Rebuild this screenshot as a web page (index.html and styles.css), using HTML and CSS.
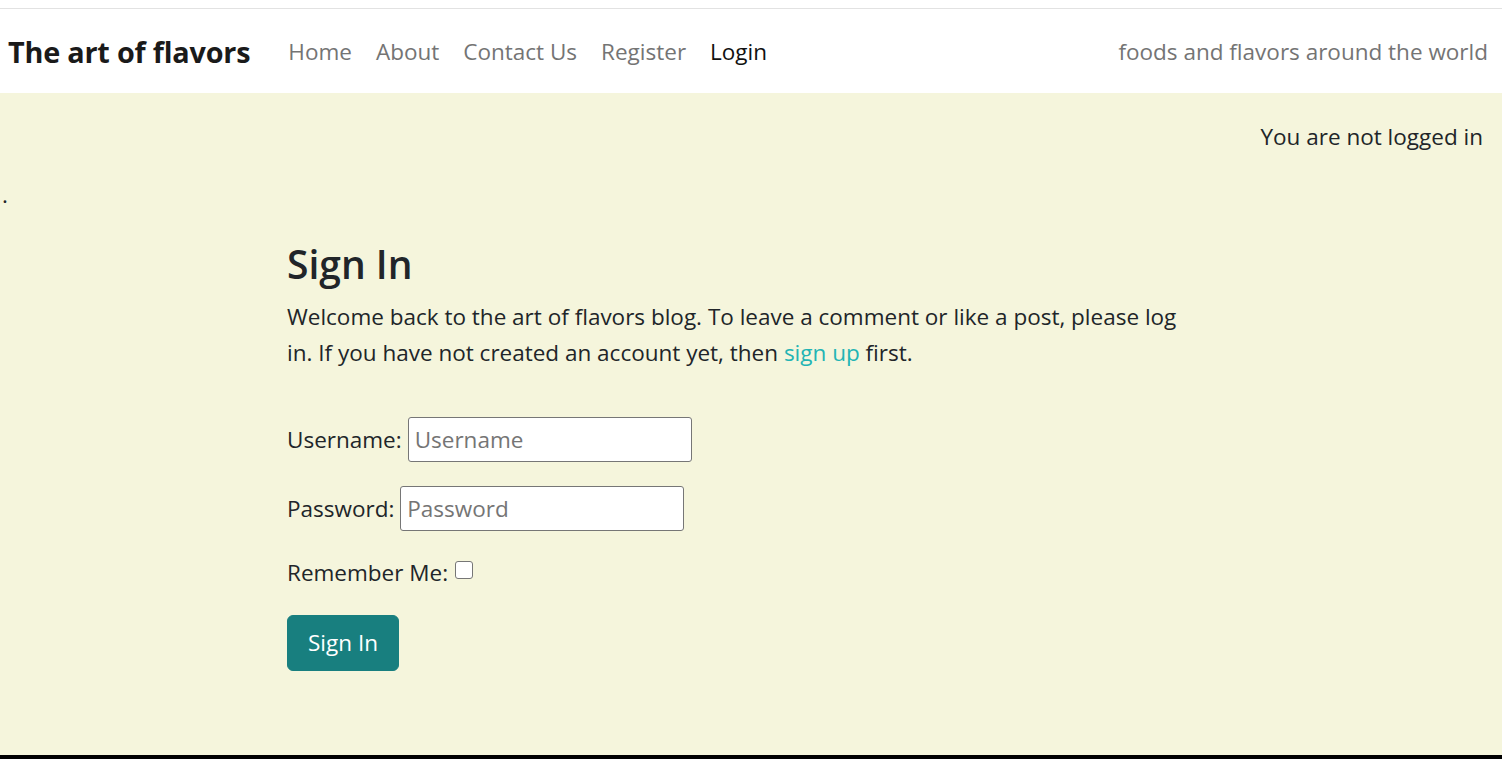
FILE: index.html
```html
<!DOCTYPE html>
<html lang="en">
<head>
<meta charset="utf-8">
<title>The art of flavors</title>
<link rel="stylesheet" href="styles.css">
</head>
<body>
<header class="site-header">
  <nav class="navbar">
    <a class="brand" href="#">The art of flavors</a>
    <ul class="nav-links">
      <li><a class="nav-link" href="#">Home</a></li>
      <li><a class="nav-link" href="#">About</a></li>
      <li><a class="nav-link" href="#">Contact Us</a></li>
      <li><a class="nav-link" href="#">Register</a></li>
      <li><a class="nav-link active" href="#">Login</a></li>
    </ul>
    <span class="tagline">foods and flavors around the world</span>
  </nav>
</header>
<main class="main">
  <p class="status">You are not logged in</p>
  <p class="dot">.</p>
  <section class="signin">
    <h2 class="title">Sign In</h2>
    <p class="intro">Welcome back to the art of flavors blog. To leave a comment or like a post, please log in. If you have not created an account yet, then <a class="link" href="#">sign up</a> first.</p>
    <form class="form">
      <div class="row">
        <label class="label" for="id_login">Username:</label>
        <input class="field" type="text" id="id_login" placeholder="Username">
      </div>
      <div class="row">
        <label class="label" for="id_password">Password:</label>
        <input class="field" type="password" id="id_password" placeholder="Password">
      </div>
      <div class="row row-check">
        <label class="label" for="id_remember">Remember Me:</label>
        <input class="check" type="checkbox" id="id_remember">
      </div>
      <button class="btn" type="submit">Sign In</button>
    </form>
  </section>
</main>
<footer class="footer"></footer>
</body>
</html>
```

FILE: styles.css
```css
* { box-sizing: border-box; }
html, body { margin: 0; padding: 0; }
body {
  font-family: "Open Sans", "Noto Sans", "Liberation Sans", sans-serif;
  font-size: 22.5px;
  line-height: 36px;
  color: #212529;
  background: #ffffff;
}
.site-header {
  background: #fff;
  padding-top: 8px;
}
.navbar {
  border-top: 1px solid #e2e2e2;
  height: 85px;
  display: flex;
  align-items: center;
  padding: 2px 14px 0 8px;
}
.brand {
  font-size: 28.8px;
  font-weight: 700;
  color: #1a1a1a;
  text-decoration: none;
  margin-right: 26px;
  letter-spacing: -0.2px;
}
.nav-links {
  display: flex;
  list-style: none;
  margin: 0;
  padding: 0;
}
.nav-link {
  display: block;
  padding: 0 12px;
  color: #747474;
  text-decoration: none;
}
.nav-link.active { color: #111; }
.tagline {
  margin-left: auto;
  color: #747474;
}
.main {
  background: #f5f5dc;
  min-height: 662px;
  padding-top: 26px;
}
.status {
  margin: 0 19px 22px 0;
  text-align: right;
}
.dot {
  margin: 0 0 0 2px;
}
.signin {
  width: 924px;
  margin-left: 287px;
  padding-top: 24px;
  padding-bottom: 84px;
}
.title {
  font-size: 39px;
  font-weight: 600;
  line-height: 54px;
  margin: 0 0 8px;
}
.intro {
  max-width: 905px;
  margin: 0 0 46px;
}
.link {
  color: #22b4b4;
  text-decoration: none;
}
.form { margin: 0; }
.row {
  display: flex;
  align-items: center;
  gap: 6px;
  margin-bottom: 24px;
}
.field {
  width: 284px;
  height: 45px;
  border: 1px solid #767676;
  border-radius: 3px;
  background: #fff;
  padding: 0 6px;
  font: inherit;
  color: #212529;
}
.field::placeholder { color: #757575; }
.row-check {
  align-items: baseline;
}
.check {
  appearance: none;
  -webkit-appearance: none;
  width: 18px;
  height: 18px;
  margin: 0 0 0 1px;
  border: 1.5px solid #767676;
  border-radius: 3px;
  background: #fff;
  align-self: center;
  position: relative;
  top: -3px;
}
.btn {
  display: block;
  font: inherit;
  color: #fff;
  background: #187f7f;
  border: 1px solid #187f7f;
  border-radius: 6px;
  padding: 9px 20px;
  height: 56px;
  cursor: pointer;
}
.footer {
  background: #000;
  height: 80px;
}
```
